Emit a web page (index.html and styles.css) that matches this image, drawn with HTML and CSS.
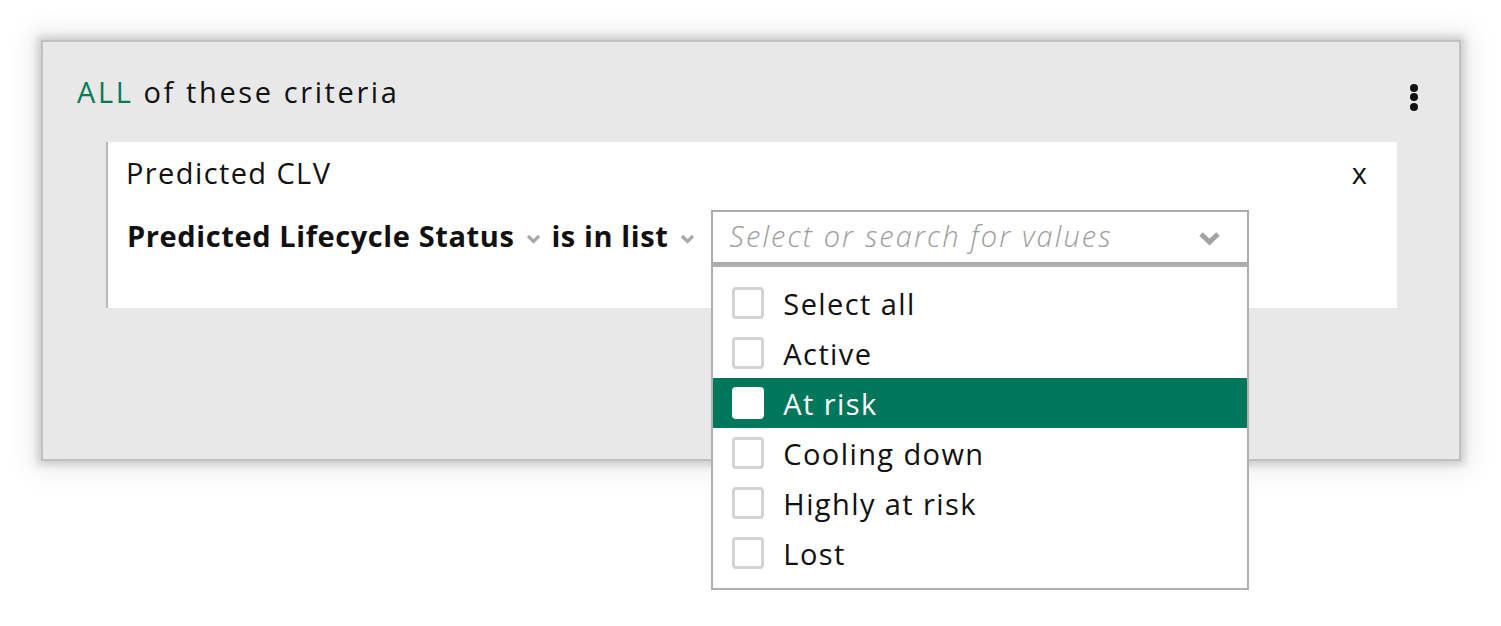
FILE: index.html
```html
<!DOCTYPE html>
<html>
<head>
<meta charset="utf-8">
<link rel="stylesheet" href="styles.css">
</head>
<body>
<div class="panel">
  <div class="panel-head">
    <div class="title"><span class="all">ALL</span> of these criteria</div>
    <div class="kebab"><span></span><span></span><span></span></div>
  </div>
  <div class="card">
    <div class="card-head">
      <div class="card-name">Predicted CLV</div>
      <div class="close">x</div>
    </div>
    <div class="rule">
      <span class="field">Predicted Lifecycle Status</span>
      <svg class="chev-sm" width="15" height="10" viewBox="0 0 15 10"><path d="M2 2 L7.5 7.5 L13 2" fill="none" stroke="#a9a9a9" stroke-width="3.2"/></svg>
      <span class="field op">is in list</span>
      <svg class="chev-sm" width="15" height="10" viewBox="0 0 15 10"><path d="M2 2 L7.5 7.5 L13 2" fill="none" stroke="#a9a9a9" stroke-width="3.2"/></svg>
      <div class="select">
        <div class="select-box">
          <span class="placeholder">Select or search for values</span>
          <svg class="chev-lg" width="23" height="15" viewBox="0 0 23 15"><path d="M3 3 L11.5 11 L20 3" fill="none" stroke="#a3a3a3" stroke-width="5"/></svg>
        </div>
        <div class="options">
          <div class="opt"><span class="cb"></span><span>Select all</span></div>
          <div class="opt"><span class="cb"></span><span>Active</span></div>
          <div class="opt sel"><span class="cb"></span><span>At risk</span></div>
          <div class="opt"><span class="cb"></span><span>Cooling down</span></div>
          <div class="opt"><span class="cb"></span><span>Highly at risk</span></div>
          <div class="opt"><span class="cb"></span><span>Lost</span></div>
        </div>
      </div>
    </div>
  </div>
</div>
</body>
</html>
```
FILE: styles.css
```css
html, body {
  margin: 0;
  padding: 0;
  background: #ffffff;
}
body {
  font-family: "Open Sans", "Liberation Sans", sans-serif;
  font-size: 29px;
  color: #111111;
  letter-spacing: 1.4px;
  padding: 42px 0 0 43px;
  height: 626px;
  box-sizing: border-box;
  overflow: hidden;
}
.panel {
  width: 1416px;
  height: 417px;
  box-sizing: border-box;
  background: #e8e8e8;
  box-shadow: 0 0 0 2px #c0c0c0, 0 0 7px 6px rgba(0,0,0,0.14), 0 0 24px 12px rgba(0,0,0,0.08);
  padding: 31px 0 0 34px;
}
.panel-head {
  display: flex;
  align-items: center;
  justify-content: space-between;
  height: 40px;
  padding-right: 41px;
}
.title {
  line-height: 40px;
  white-space: nowrap;
  letter-spacing: 2.6px;
  padding-bottom: 2px;
}
.all {
  color: #087a55;
}
.kebab {
  display: flex;
  flex-direction: column;
  gap: 1.5px;
  margin-top: 8px;
}
.kebab span {
  width: 8px;
  height: 8px;
  border-radius: 50%;
  background: #111;
}
.card {
  margin: 29px 0 0 29px;
  width: 1291px;
  height: 166px;
  box-sizing: border-box;
  background: #ffffff;
  border-left: 2px solid #b9b9b9;
  padding: 11px 30px 0 18px;
}
.card-head {
  display: flex;
  justify-content: space-between;
  align-items: center;
  height: 40px;
  line-height: 40px;
}
.close {
  letter-spacing: 0;
}
.rule {
  display: flex;
  align-items: center;
  margin-top: 17px;
  height: 55px;
  padding-left: 1px;
}
.field {
  font-weight: 700;
  line-height: 40px;
  white-space: nowrap;
  letter-spacing: 0.6px;
  padding-bottom: 4px;
}
.chev-sm {
  margin: 2px 10px 0 12px;
}
.select {
  position: relative;
  margin-left: 6px;
  width: 538px;
}
.select-box {
  height: 55px;
  box-sizing: border-box;
  border: 2px solid #acacac;
  border-bottom-width: 3px;
  display: flex;
  align-items: center;
  justify-content: space-between;
  padding: 0 26px 0 16px;
}
.placeholder {
  font-style: italic;
  font-weight: 300;
  color: #9c9c9c;
  white-space: nowrap;
  padding-bottom: 3px;
  letter-spacing: 2.1px;
}
.chev-lg {
  margin-top: 2px;
}
.options {
  position: absolute;
  top: 55px;
  left: 0;
  width: 538px;
  box-sizing: border-box;
  background: #ffffff;
  border: 2px solid #b0b0b0;
  padding: 11px 0 10px;
}
.opt {
  height: 50px;
  display: flex;
  align-items: center;
  padding-left: 19px;
  gap: 19px;
  white-space: nowrap;
}
.cb {
  width: 32px;
  height: 32px;
  box-sizing: border-box;
  border: 3px solid #d4d4d4;
  border-radius: 4px;
  background: #ffffff;
  flex: none;
}
.opt.sel {
  background: #00775a;
  color: #ffffff;
}
.opt.sel .cb {
  border-color: #ffffff;
}
```
